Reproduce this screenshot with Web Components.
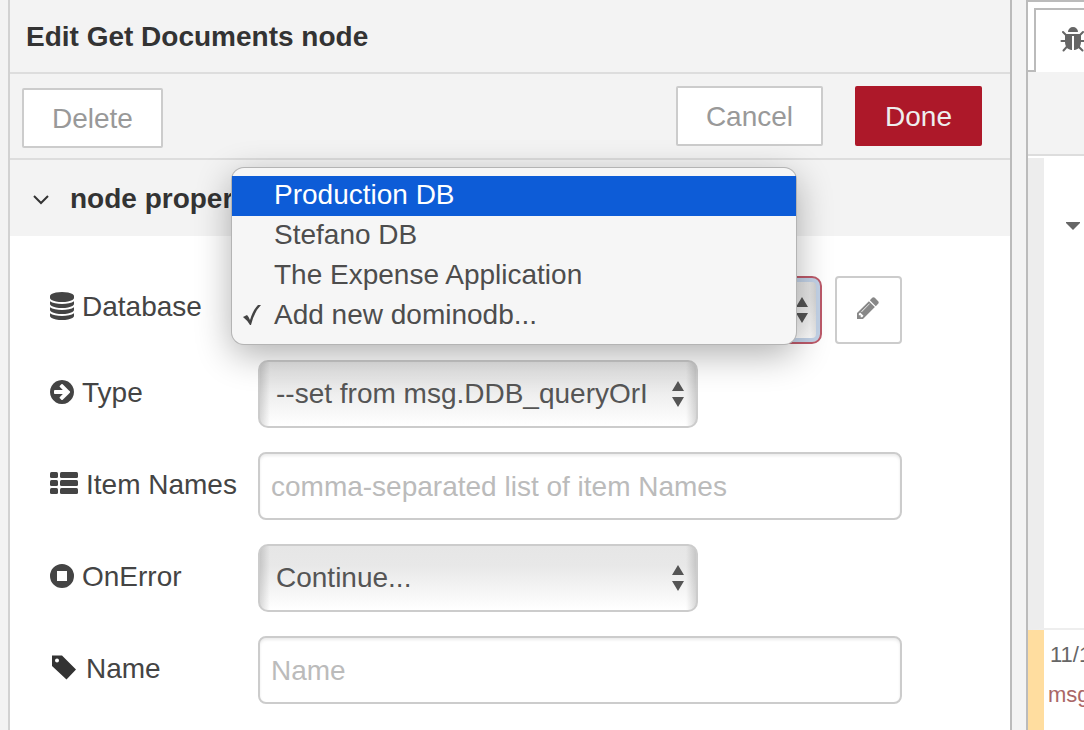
<!DOCTYPE html>
<html lang="en">
<head>
<meta charset="utf-8">
<meta name="viewport" content="width=device-width, initial-scale=1">
<title>Edit Get Documents node</title>
<style>
  html, body { height: 100%; }
  body {
    margin: 0;
    background: #f3f3f3;
    color: #444;
    font: 28px/40px "Liberation Sans", Arial, sans-serif;
    overflow: hidden;
  }
</style>
</head>
<body>
<editor-shell>
  <edit-tray heading="Edit Get Documents node">
    <tray-button slot="start" label="Delete"></tray-button>
    <tray-button slot="end" label="Cancel"></tray-button>
    <tray-button slot="end" label="Done" primary></tray-button>
    <property-section heading="node properties">
      <node-form></node-form>
    </property-section>
  </edit-tray>
  <debug-sidebar slot="sidebar"></debug-sidebar>
</editor-shell>

<script>
const define = (name, html, setup) => {
  const template = document.createElement('template');
  template.innerHTML = '<style>*{box-sizing:border-box}</style>' + html;
  customElements.define(name, class extends HTMLElement {
    constructor() {
      super();
      this.attachShadow({ mode: 'open' }).append(template.content.cloneNode(true));
    }
    connectedCallback() { if (setup) setup(this, this.shadowRoot); }
  });
};

const icons = {
  database: ['128 0 1536 1792', 24, 28, '<path d="M896 768q237 0 443-43t325-127v170q0 69-103 128t-280 93.5-385 34.5-385-34.5-280-93.5-103-128v-170q119 84 325 127t443 43zm0 768q237 0 443-43t325-127v170q0 69-103 128t-280 93.5-385 34.5-385-34.5-280-93.5-103-128v-170q119 84 325 127t443 43zm0-384q237 0 443-43t325-127v170q0 69-103 128t-280 93.5-385 34.5-385-34.5-280-93.5-103-128v-170q119 84 325 127t443 43zm0-1152q208 0 385 34.5t280 93.5 103 128v128q0 69-103 128t-280 93.5-385 34.5-385-34.5-280-93.5-103-128v-128q0-69 103-128t280-93.5 385-34.5z"/>'],
  arrow: ['128 0 1536 1792', 24, 28, '<path d="M1413 896q0-27-18-45l-91-91-362-362q-18-18-45-18t-45 18l-91 91q-18 18-18 45t18 45l189 189h-502q-26 0-45 19t-19 45v128q0 26 19 45t45 19h502l-189 189q-19 19-19 45t19 45l91 91q18 18 45 18t45-18l362-362 91-91q18-18 18-45zm251 0q0 209-103 385.5t-279.5 279.5-385.5 103-385.5-103-279.5-279.5-103-385.5 103-385.5 279.5-279.5 385.5-103 385.5 103 279.5 279.5 103 385.5z"/>'],
  list: ['0 0 28 28', 28, 28, '<rect y="2" width="8" height="6" rx="1.5"/><rect x="10" y="2" width="18" height="6" rx="1.5"/><rect y="10" width="8" height="6" rx="1.5"/><rect x="10" y="10" width="18" height="6" rx="1.5"/><rect y="18" width="8" height="6" rx="1.5"/><rect x="10" y="18" width="18" height="6" rx="1.5"/>'],
  stop: ['0 0 24 28', 24, 28, '<path fill-rule="evenodd" d="M12 2a12 12 0 1 0 0 24a12 12 0 1 0 0-24zM7 9h10v10H7z"/>'],
  tag: ['0 0 28 28', 28, 28, '<path fill="#333" fill-rule="evenodd" d="M2 1.6h10L26 15.600l-9.500 9.800L2 12zM7 4.600a2 2 0 1 0 0 4a2 2 0 1 0 0-4z"/>'],
  pencil: ['128 128 1536 1536', 22, 22, '<path d="M491 1536l91-91-235-235-91 91v107h128v128h107zm523-928q0-22-22-22-10 0-17 7l-542 542q-7 7-7 17 0 22 22 22 10 0 17-7l542-542q7-7 7-17zm-54-192l416 416-832 832h-416v-416zm683 96q0 53-37 90l-166 166-416-416 166-165q36-38 90-38 53 0 91 38l235 234q37 39 37 91z"/>'],
  bug: ['0 0 1792 1792', 28, 28, '<path d="M1696 960q0 26-19 45t-45 19h-224q0 171-67 290l208 209q19 19 19 45t-19 45q-18 19-45 19t-45-19l-198-197q-5 5-15 13t-42 28.500-65 36.500-82 29-97 13v-896h-128v896q-51 0-101.500-13.500t-87-33-66-39-43.500-32.500l-15-14-183 207q-20 21-48 21-24 0-43-16-19-18-20.500-44.500t15.500-46.500l202-227q-58-114-58-274h-224q-26 0-45-19t-19-45 19-45 45-19h224v-294l-173-173q-19-19-19-45t19-45 45-19 45 19l173 173h844l173-173q19-19 45-19t45 19 19 45-19 45l-173 173v294h224q26 0 45 19t19 45zm-480-576h-640q0-133 93.500-226.500t226.500-93.500 226.500 93.500 93.500 226.500z"/>'],
  chevron: ['0 0 20 20', 20, 20, '<path d="M3 7l7 7 7-7" fill="none" stroke="currentColor" stroke-width="2"/>'],
  check: ['0 0 20 24', 20, 24, '<path d="M1 14l4-2q2 2 3 5Q11 7 16 2h3Q12 9 9 22H8Q5 17 1 14z"/>'],
  caret: ['0 0 14 8', 14, 8, '<path d="M0 0h14v1L7 8 0 1z"/>'],
  updown: ['0 0 12 26', 12, 26, '<path d="M0 10L6 0l6 10zM0 16h12L6 26z"/>']
};

define('ui-icon', `
  <style>
    :host { display: inline-flex; flex: none; }
    svg { display: block; fill: currentColor; }
  </style><svg aria-hidden="true"></svg>`,
  (host, root) => {
    const [box, w, h, body] = icons[host.getAttribute('name')];
    const svg = root.querySelector('svg');
    svg.setAttribute('viewBox', box);
    svg.setAttribute('width', w);
    svg.setAttribute('height', h);
    svg.innerHTML = body;
  });

define('editor-shell', `
  <style>
    :host { display: grid; grid-template-columns: minmax(0, 1fr) 58px; column-gap: 14px;
            min-height: 100vh; padding-left: 8px; background: #f3f3f3; overflow: hidden; }
  </style>
  <slot></slot><slot name="sidebar"></slot>`);

define('edit-tray', `
  <style>
    :host { display: flex; flex-direction: column; background: #fff;
            border-left: 2px solid #d2d2d2; border-right: 2px solid #bbb; }
    header, .bar { background: #f3f3f3; border-bottom: 2px solid #ddd; }
    header { padding: 17px 16px 15px; }
    h1 { margin: 0; font-size: 28px; line-height: 40px; color: #333; }
    .bar { display: flex; justify-content: space-between; padding: 12px 28px 12px 12px; }
    .start { display: flex; padding-top: 2px; margin-bottom: -2px; }
    .end { display: flex; gap: 32px; }
  </style>
  <header><h1></h1></header>
  <div class="bar">
    <div class="start"><slot name="start"></slot></div>
    <div class="end"><slot name="end"></slot></div>
  </div>
  <slot></slot>`,
  (host, root) => { root.querySelector('h1').textContent = host.getAttribute('heading'); });

define('tray-button', `
  <style>
    :host { display: block; }
    button { height: 60px; padding: 2px 28px 0; font: inherit; color: #999; background: #fff;
             border: 2px solid #ccc; border-radius: 2px; white-space: nowrap; }
    :host([primary]) button { color: #eee; background: #ad1829; border-color: #ad1829; }
  </style>
  <button type="button"></button>`,
  (host, root) => { root.querySelector('button').textContent = host.getAttribute('label'); });

define('property-section', `
  <style>
    :host { display: block; }
    h2 { margin: 0; display: flex; align-items: center; gap: 19px; height: 76px; padding: 2px 21px 0;
         background: #f3f3f3; color: #333; font-size: 28px; line-height: 40px; }
  </style>
  <h2><ui-icon name="chevron"></ui-icon><span></span></h2>
  <slot></slot>`,
  (host, root) => { root.querySelector('span').textContent = host.getAttribute('heading'); });

define('choice-menu', `
  <style>
    :host { display: block; padding: 8px 0; background: #f6f6f6; border-radius: 12px;
            box-shadow: 0 0 0 1px #b4b4b4, 0 10px 36px rgba(0,0,0,.32); }
    ul { margin: 0; padding: 0; list-style: none; }
    li { display: flex; align-items: center; height: 40px; padding: 0 10px 2px; line-height: 36px;
         color: #4d4d4d; white-space: nowrap; }
    .mark { flex: none; width: 32px; display: flex; color: #444; }
    .current { background: #0d5cd7; color: #fff; }
  </style>
  <ul role="listbox" aria-label="Database">
    <li role="option" class="current"><span class="mark"></span>Production DB</li>
    <li role="option"><span class="mark"></span>Stefano DB</li>
    <li role="option"><span class="mark"></span>The Expense Application</li>
    <li role="option" aria-selected="true"><span class="mark"><ui-icon name="check"></ui-icon></span>Add new dominodb...</li>
  </ul>`);

define('node-form', `
  <style>
    :host { display: block; padding: 40px 108px 24px 40px; }
    form { display: grid; gap: 24px; }
    .row { display: grid; grid-template-columns: 208px minmax(0, 1fr); align-items: center; }
    .row.first { margin-bottom: -8px; }
    label { display: flex; align-items: center; gap: 8px; padding-bottom: 2px; white-space: nowrap; }
    label ui-icon { padding-bottom: 2px; }
    .first label { padding-bottom: 6px; }
    .field { position: relative; display: flex; gap: 13px; }
    input, select { width: 100%; height: 68px; font: inherit; border: 2px solid #ccc; margin: 0; }
    input { padding: 2px 11px 0; border-radius: 8px; background: #fff; color: #555;
            box-shadow: inset 0 2px 3px rgba(0,0,0,.08); }
    input::placeholder { color: #bbb; opacity: 1; }
    .pick { display: grid; flex: 1; align-items: center; }
    .pick.short { max-width: 440px; }
    .pick > * { grid-area: 1 / 1; }
    .pick ui-icon { justify-self: end; margin-right: 14px; color: #555; pointer-events: none; }
    select { appearance: none; padding: 0 44px 0 16px; border-radius: 10px; color: #555;
             background: linear-gradient(90deg, rgba(0,0,0,.14), transparent 10px, transparent calc(100% - 10px), rgba(0,0,0,.14)),
                         linear-gradient(#e6e6e6, #e8e8e8 30%, #fff); }
    .active select { border-color: #bd5a6a; box-shadow: inset 0 0 0 4px #c3d3e8; }
    .edit { flex: none; width: 67px; height: 68px; padding: 0 2px 4px 0; display: grid; place-items: center;
            background: #fff; border: 2px solid #ccc; border-radius: 4px; color: #888; }
    choice-menu { position: absolute; z-index: 2; left: -26px; right: 106px; top: -108px; }
  </style>
  <form>
    <div class="row first">
      <label for="database"><ui-icon name="database"></ui-icon>Database</label>
      <div class="field">
        <div class="pick active">
          <select id="database"><option>Add new dominodb...</option><option>Production DB</option><option>Stefano DB</option><option>The Expense Application</option></select>
          <ui-icon name="updown"></ui-icon>
        </div>
        <button class="edit" type="button" aria-label="Edit database"><ui-icon name="pencil"></ui-icon></button>
        <choice-menu></choice-menu>
      </div>
    </div>
    <div class="row">
      <label for="type"><ui-icon name="arrow"></ui-icon>Type</label>
      <div class="field"><div class="pick short">
        <select id="type"><option>--set from msg.DDB_queryOrI</option></select>
        <ui-icon name="updown"></ui-icon>
      </div></div>
    </div>
    <div class="row">
      <label for="items"><ui-icon name="list"></ui-icon>Item Names</label>
      <div class="field"><input id="items" type="text" placeholder="comma-separated list of item Names"></div>
    </div>
    <div class="row">
      <label for="onerror"><ui-icon name="stop"></ui-icon>OnError</label>
      <div class="field"><div class="pick short">
        <select id="onerror"><option>Continue...</option></select>
        <ui-icon name="updown"></ui-icon>
      </div></div>
    </div>
    <div class="row">
      <label for="name"><ui-icon name="tag"></ui-icon>Name</label>
      <div class="field"><input id="name" type="text" placeholder="Name"></div>
    </div>
  </form>`);

define('debug-sidebar', `
  <style>
    :host { display: flex; flex-direction: column; min-width: 0; overflow: hidden; background: #fff;
            border-left: 2px solid #bbb; border-top: 2px solid #bbb; }
    .tabs { display: flex; height: 70px; padding-top: 6px; }
    .stub { flex: none; width: 6px; border-bottom: 2px solid #bbb; }
    .tab { flex: none; display: flex; align-items: center; width: 80px; padding: 0 23px 2px;
           border: 0 solid #bbb; border-width: 2px 0 0 2px; background: #fff; color: #666; }
    .tools { height: 84px; background: #f3f3f3; border-bottom: 2px solid #ddd; }
    .message { display: block; border-left: 16px solid #ededed; color: #666; font-size: 22px; line-height: 40px; white-space: nowrap; }
    .open { display: flex; align-items: flex-start; height: 472px; margin-top: 2px; padding: 64px 22px; border-bottom: 2px solid #eee; }
    .warn { flex: 1; border-left-color: #ffdd9f; padding: 5px 4px; }
    p { margin: 0; }
    .date { padding-left: 2px; }
    .topic { color: #aa6767; }
  </style>
  <div class="tabs"><span class="stub"></span><button class="tab" type="button" aria-label="Debug"><ui-icon name="bug"></ui-icon></button></div>
  <div class="tools"></div>
  <div class="message open"><ui-icon name="caret"></ui-icon></div>
  <div class="message warn"><p class="date">11/1</p><p class="topic">msg</p></div>`);
</script>
</body>
</html>
